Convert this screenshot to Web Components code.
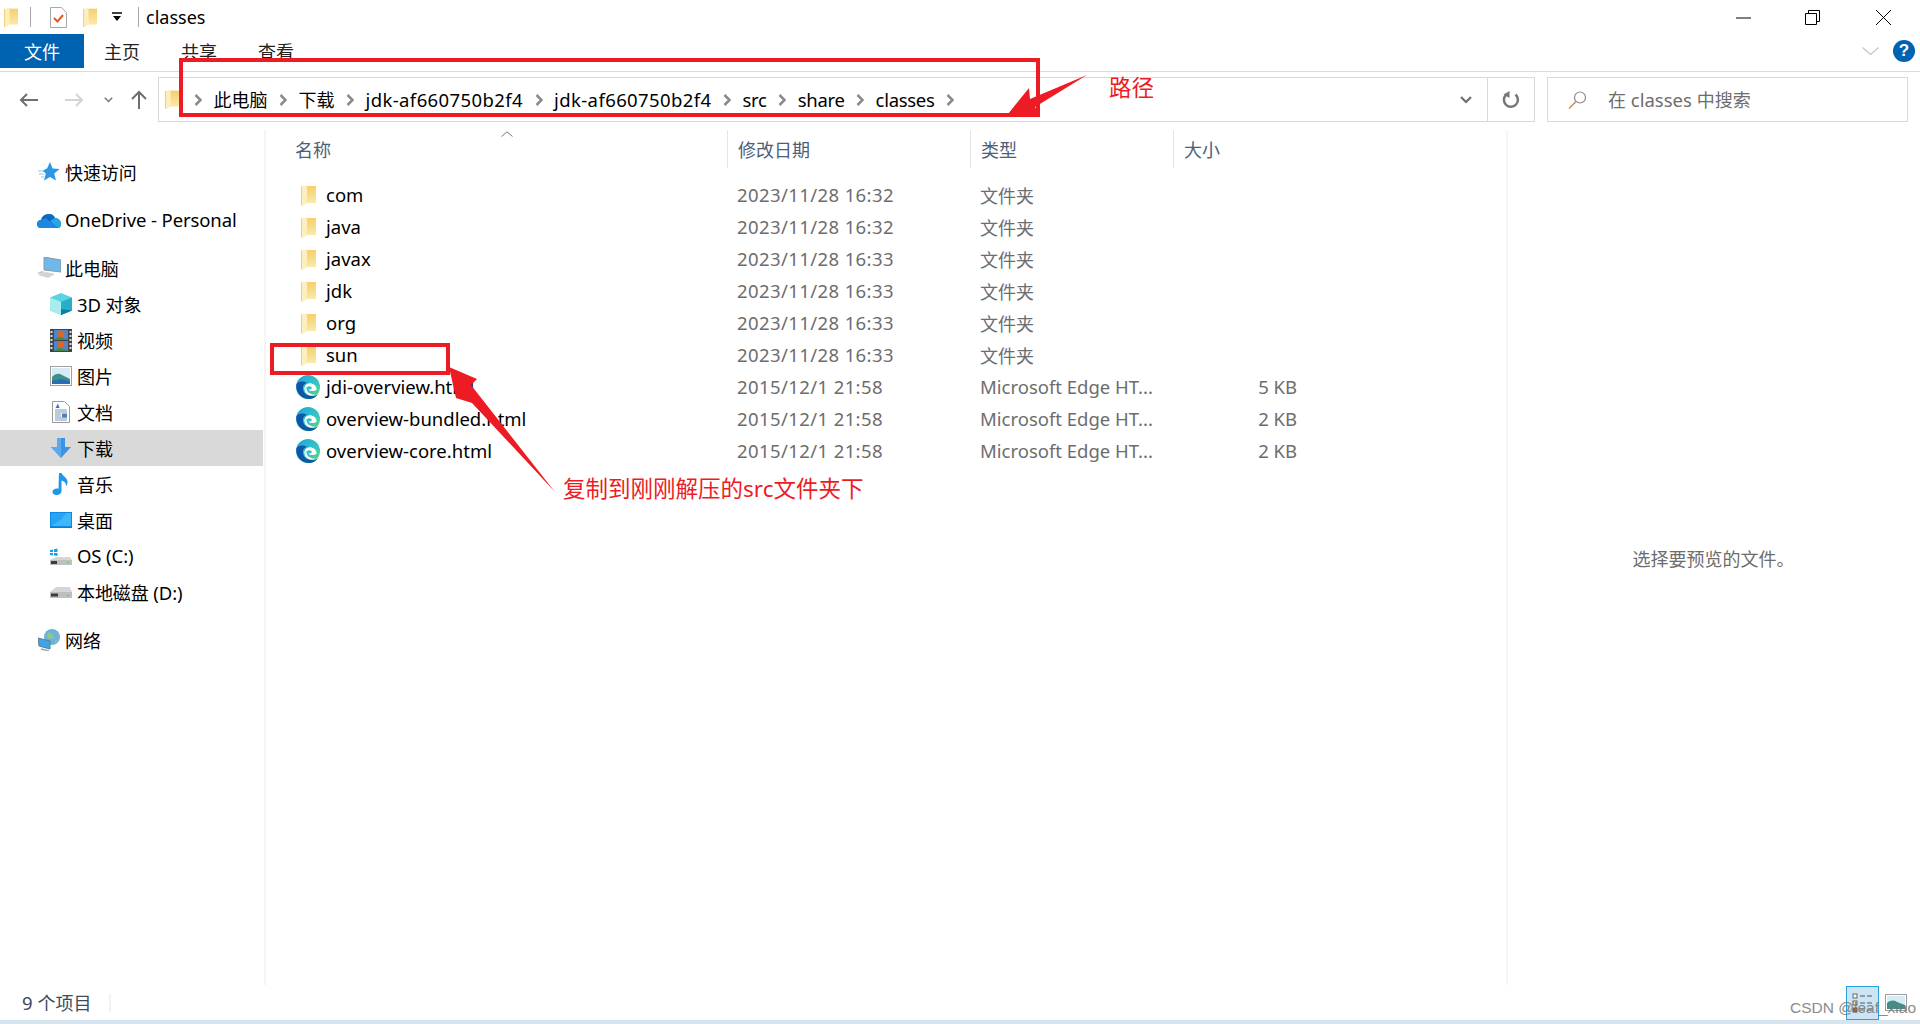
<!DOCTYPE html>
<html lang="zh">
<head>
<meta charset="utf-8">
<title>classes</title>
<style>
html,body{margin:0;padding:0;background:#fff}
body{width:1920px;height:1024px;overflow:hidden;position:relative;display:flex;flex-direction:column;font-family:"Noto Sans","Noto Sans CJK SC",sans-serif;color:#000}
win-main{flex:1}
</style>
</head>
<body>
<win-title label="classes"></win-title>
<win-ribbon></win-ribbon>
<win-address></win-address>
<win-main></win-main>
<win-status></win-status>
<win-notes></win-notes>
<script>
// icons
const folderIcon=(w=15,h=21)=>`<svg width="${w}" height="${h}" viewBox="0 0 15 21"><defs><linearGradient id="fb" x1="0" y1="0" x2="0" y2="1"><stop offset="0" stop-color="#f3cf6f"/><stop offset="1" stop-color="#fce8a8"/></linearGradient></defs><path d="M5 1H15V18H5z" fill="url(#fb)"/><path d="M0 1.5 6 0V18L1 21 0 20z" fill="#fdeebc"/><path d="M0 1.5 1 1V21L0 20z" fill="#f1cf77"/></svg>`
const edgeIcon=`<svg width="24" height="24" viewBox="0 0 24 24"><defs><linearGradient id="eg" x1="0" y1="0" x2="1" y2="1"><stop offset="0" stop-color="#1e9fdc"/><stop offset=".55" stop-color="#2fc5c8"/><stop offset="1" stop-color="#6ad86e"/></linearGradient></defs><circle cx="12" cy="12" r="12" fill="url(#eg)"/><path d="M.6 9C-1 17 5 24 13 24c4 0 7-2 8.500-4.500-5 2.500-11 1.500-13.500-2.500C5.500 13 7 8.500 11 8 7 5.500 2 6.500.6 9z" fill="#0d57a5"/><path d="M8.500 15.500C7.500 11 11 7.500 15.500 8.500c3.500.8 5.500 3.500 5 6.500-3 1.500-6.500 1.300-8-.3 1.500 0 3-.5 3.500-1.700-.7-1.800-3.500-2.300-5-1-1.500 1.200-2 2.500-2.500 3.500z" fill="#fff"/><path d="M9 17c2 3.500 7 5 12 2.800-3.500.3-7.500-.6-9.500-3.300-.8-1.100-1-2.500-.6-3.500C9.300 13.500 8.300 15.500 9 17z" fill="#fff"/></svg>`
const navIcons={
star:`<svg width="22" height="20" viewBox="0 0 22 20"><path d="M12 0l2.600 6.500 7 .5-5.400 4.500 1.800 7L12 15l-6 3.500 1.800-7-3-2.500 2.700-2 1.500-.5z" fill="#2d97e6"/><path d="M0 9h6M1 12h5M3 15h3" stroke="#8cc6f2" stroke-width="1"/></svg>`,
cloud:`<svg width="24" height="16" viewBox="0 0 24 16"><path d="M4 16C1 16 0 13.500 0 12c0-2.500 2-4 4-4 1-4 4-6 8-6 2.500 0 5 1.500 6 4 3.500 0 6 3 6 6 0 2-1 4-3 4z" fill="#0a64b8"/><path d="M7 5.500C8.500 3 10 2 12 2c2.500 0 5 1.500 6 4l-4 2-4-3z" fill="#0f6cc4"/><path d="M0 12c0-2.500 2-4 4-4l5-2 12 10H4C1 16 0 13.500 0 12z" fill="#1a8ae0"/><path d="M13 9l5-3c3.500 0 6 3 6 6 0 2-1 4-3 4z" fill="#2aa5e8"/></svg>`,
pc:`<svg width="24" height="22" viewBox="0 0 24 22"><path d="M7 0l17 3v12L7 13z" fill="#6fb8ea" stroke="#8a9aa6" stroke-width="1"/><path d="M1 18l8-3 9 2-7 4z" fill="#d0d4d8"/><path d="M0 16l5-2 3 1-5 2z" fill="#c2c7cc"/></svg>`,
cube:`<svg width="22" height="22" viewBox="0 0 22 22"><path d="M11 0l11 4.500v13L11 22 0 17.500v-13z" fill="#5ad3e3"/><path d="M0 4.500L11 9v13L0 17.500z" fill="#a9ecf0"/><path d="M22 4.500L11 9v13l11-4.500z" fill="#26afc9"/><path d="M11 16l11 1.500L11 22z" fill="#0f7f9c"/></svg>`,
film:`<svg width="22" height="23" viewBox="0 0 22 23"><rect width="22" height="23" fill="#444"/><rect x="4" y="1" width="14" height="10" fill="#4b86d0"/><rect x="4" y="12" width="14" height="10" fill="#4b86d0"/><circle cx="11" cy="5" r="3.500" fill="#d9672a"/><path d="M4 11l5-3 4 1 5 2z" fill="#3f8b3a"/><circle cx="11" cy="16" r="3.500" fill="#d9672a"/><path d="M4 22l5-3 4 1 5 2z" fill="#3f8b3a"/><path d="M1.500 2v19M20.500 2v19" stroke="#ddd" stroke-width="2" stroke-dasharray="2 2"/></svg>`,
pic:`<svg width="22" height="20" viewBox="0 0 22 20"><rect x=".5" y=".5" width="21" height="19" fill="#fff" stroke="#a0a0a0"/><rect x="2" y="2" width="18" height="16" fill="#d7eaf5"/><path d="M2 11c4-4 7-4 10-2l8 4v5H2z" fill="#3f8f88"/><path d="M2 15l9-2 9 2v3H2z" fill="#2a6fb0"/></svg>`,
doc:`<svg width="18" height="22" viewBox="0 0 18 22"><path d="M.5.500h12l5 5v16H.5z" fill="#fff" stroke="#9a9a9a"/><path d="M3 9h12M3 11h12M3 13h6M3 15h6M3 17h12M3 19h12" stroke="#7d97b3"/><rect x="10" y="12.500" width="5" height="4" fill="#4f81b5"/><path d="M6 2.500L3.500 7h4z" fill="#2d7bc8"/></svg>`,
down:`<svg width="20" height="20" viewBox="0 0 20 20"><path d="M6 0h8v9h6L10 20 0 9h6z" fill="#3b93e3"/><path d="M6 0h4v20L0 9h6z" fill="#5aaaf0"/></svg>`,
music:`<svg width="18" height="22" viewBox="0 0 18 22"><path d="M7 0h2.500c.5 3 6.500 4.500 6 10-.2 1.500-1 2.500-1.500 3 .3-3-2-5-4.500-5.500V18c0 2.500-2.500 4-5 4-2.200 0-4-1-4-3 0-2.500 3-4 6-3.200z" fill="#1c98e8"/></svg>`,
desk:`<svg width="22" height="16" viewBox="0 0 22 16"><rect width="22" height="16" fill="#0f88e0"/><path d="M1 1h20v13H1z" fill="#26a5f5"/><path d="M1 14l10-6 5-7h5v13z" fill="#40b6fa"/><rect y="15" width="22" height="1" fill="#666"/></svg>`,
os:`<svg width="22" height="17" viewBox="0 0 22 17"><path d="M0 12l6-3h14l2 3v5H0z" fill="#d6d6d6"/><path d="M0 12h22v5H0z" fill="#bfbfbf"/><rect x="1" y="13" width="6" height="3" fill="#3c3c3c"/><rect x="17" y="14" width="2" height="1" fill="#4fd34f"/><path d="M0 2l3-.5V4H0zM4 1.300L7.500.5V4H4zM0 5h3v2.500L0 7zM4 5h3.500v3L4 7.500z" fill="#14a3e8"/></svg>`,
disk:`<svg width="22" height="11" viewBox="0 0 22 11"><path d="M0 5l6-5h14l2 5v6H0z" fill="#d6d6d6"/><path d="M0 5h22v6H0z" fill="#bfbfbf"/><rect x="1" y="6.500" width="7" height="3" fill="#3c3c3c"/><rect x="17" y="8" width="2" height="1" fill="#4fd34f"/></svg>`,
net:`<svg width="22" height="22" viewBox="0 0 22 22"><circle cx="14" cy="8" r="8" fill="#6fb2d8"/><path d="M10 3l4 2 2 4-4 1-3-2zM17 11l3 1-3 3z" fill="#8fc78a"/><path d="M0 9l12 3v8L1 17z" fill="#3fa5e8" stroke="#5c7c95" stroke-width="1"/><path d="M3 20l8 2" stroke="#9ca7ae" stroke-width="1.500"/></svg>`
}

// mixed text: CJK runs get a smaller box than latin
const txt=s=>s.replace(/[\u3000-\u9fff]+/g,m=>`<span class="c">${m}</span>`)

class WinView extends HTMLElement {
    constructor()
    {
        super()
        this.attachShadow({mode:"open"})
    }
    get overideCSS(){return ``}
    get overideTemplate(){return ``}
    connectedCallback()
    {
        this.shadowRoot.innerHTML=`<style>
            *{box-sizing:border-box}
            :host{display:block;box-sizing:border-box;font-family:"Noto Sans","Noto Sans CJK SC",sans-serif;font-size:18.500px;line-height:24px}
            .c{font-size:18px;font-family:"Noto Sans CJK SC","Noto Sans",sans-serif}
            svg{display:block;flex:none}
            ${this.overideCSS}</style>${this.overideTemplate}`
    }
}

class WinTitle extends WinView{
    get overideCSS(){return `
        :host{height:34px}
        .bar{height:34px;display:flex;align-items:center}
        .sep{width:1px;height:20px;background:#a8a8a8}
        .name{margin-left:7px;font-size:18px}
        .ctl{margin-left:auto;display:flex;align-items:center}
        .a{margin-left:4px}
    `}
    get overideTemplate(){return `<div class="bar">
        <span class="a">${folderIcon(14,21)}</span>
        <span class="sep" style="margin-left:12px"></span>
        <svg style="margin-left:19px" width="17" height="21" viewBox="0 0 17 21"><path d="M.5.500h11l5 5v15H.5z" fill="#fff" stroke="#a8a8a8"/><path d="M4 11l3.500 3.500L13 8" fill="none" stroke="#e8571f" stroke-width="2"/></svg>
        <span style="margin-left:16px">${folderIcon(14,21)}</span>
        <svg style="margin-left:15px" width="10" height="10" viewBox="0 0 10 10"><path d="M0 1h10" stroke="#000" stroke-width="1.500"/><path d="M1 4h8L5 9z" fill="#000"/></svg>
        <span class="sep" style="margin-left:16px"></span>
        <span class="name">${this.getAttribute('label')}</span>
        <div class="ctl">
            <svg width="15" height="15" viewBox="0 0 15 15"><path d="M0 8h15" stroke="#000"/></svg>
            <svg style="margin-left:54px" width="15" height="15" viewBox="0 0 15 15" fill="none" stroke="#000"><path d="M.5 3.500h11v11H.5z"/><path d="M3.500 3.500V.5h11v11h-3"/></svg>
            <svg style="margin-left:56px;margin-right:29px" width="15" height="15" viewBox="0 0 15 15" stroke="#000"><path d="M0 0l15 15M15 0L0 15"/></svg>
        </div>
    </div>`}
}

class WinRibbon extends WinView{
    get overideCSS(){return `
        :host{height:38px;border-bottom:1px solid #dadada}
        .bar{height:34px;display:flex;align-items:center}
        .file{width:84px;height:34px;background:#0063b1;color:#fff;display:flex;align-items:center;justify-content:center}
        .tab{margin-left:20px;width:36px;color:#222}
        .tab+.tab{margin-left:41px}
        .right{margin-left:auto;display:flex;align-items:center;padding-right:5px;gap:14px}
        .help{width:22px;height:22px;border-radius:50%;background:#0063b1;color:#fff;font:bold 17px/22px "Liberation Sans",sans-serif;text-align:center}
    `}
    get overideTemplate(){return `<div class="bar">
        <div class="file">${txt('文件')}</div>
        <div class="tab">${txt('主页')}</div>
        <div class="tab">${txt('共享')}</div>
        <div class="tab">${txt('查看')}</div>
        <div class="right">
            <svg width="17" height="9" viewBox="0 0 17 9"><path d="M.5.500l8 7 8-7" fill="none" stroke="#c4c4c4" stroke-width="1.200"/></svg>
            <div class="help">?</div>
        </div>
    </div>`}
}

class WinAddress extends WinView{
    get overideCSS(){return `
        :host{height:50px;padding-top:5px}
        .bar{display:flex;align-items:center;height:45px}
        .nav{width:158px;display:flex;align-items:center;flex:none;position:relative}
        .box{width:1377px;height:45px;border:1px solid #d9d9d9;display:flex;align-items:center;padding-left:6px;flex:none}
        .crumb{display:flex;align-items:center;gap:11.500px;margin-left:15px}
        .wide{letter-spacing:.4px}
        .tight{letter-spacing:-.3px}
        .drop{margin-left:auto;margin-right:15px}
        .refresh{width:47px;height:43px;border-left:1px solid #d9d9d9;display:flex;align-items:center;justify-content:center}
        .search{margin-left:12px;width:361px;height:45px;border:1px solid #d9d9d9;display:flex;align-items:center;padding-left:20px;color:#6d6d6d}
        .search span.t{margin-left:21px}
    `}
    get overideTemplate(){
        const chev=`<svg width="8" height="12" viewBox="0 0 8 12"><path d="M1.500 1l5 5-5 5" fill="none" stroke="#8a8a8a" stroke-width="2.500"/></svg>`
        const path=[['此电脑',''],['下载',''],['jdk-af660750b2f4','wide'],['jdk-af660750b2f4','wide'],['src','tight'],['share','tight'],['classes','tight']]
        return `<div class="bar">
        <div class="nav">
            <svg style="margin-left:19px" width="19" height="14" viewBox="0 0 19 14"><path d="M19 7H2M8 1L2 7l6 6" fill="none" stroke="#6f6f6f" stroke-width="2"/></svg>
            <svg style="margin-left:27px" width="19" height="14" viewBox="0 0 19 14"><path d="M0 7h17M11 1l6 6-6 6" fill="none" stroke="#d4d4d4" stroke-width="2"/></svg>
            <svg style="margin-left:20px" width="9" height="6" viewBox="0 0 9 6"><path d="M.8.800l3.700 3.700L8.200.800" fill="none" stroke="#777" stroke-width="1.500"/></svg>
            <svg style="margin-left:18px" width="16" height="19" viewBox="0 0 16 19"><path d="M8 19V2M1 9l7-7 7 7" fill="none" stroke="#6f6f6f" stroke-width="2"/></svg>
        </div>
        <div class="box">
            ${folderIcon(14,21)}
            <div class="crumb">${chev}${path.map(p=>`<span class="${p[1]}">${txt(p[0])}</span>${chev}`).join('')}</div>
            <svg class="drop" width="12" height="8" viewBox="0 0 12 8"><path d="M1 1l5 5 5-5" fill="none" stroke="#6f6f6f" stroke-width="2.200"/></svg>
            <div class="refresh"><svg width="18" height="18" viewBox="0 0 18 18"><path d="M13.500 3.500A7 7 0 1 1 4 3.800" fill="none" stroke="#777" stroke-width="2.500"/><path d="M7.500 0v7L1.500 3.500z" fill="#777"/></svg></div>
        </div>
        <div class="search">
            <svg width="19" height="18" viewBox="0 0 19 18" fill="none"><circle cx="12" cy="6.500" r="5.500" stroke="#8a8a8a" stroke-width="1.200"/><path d="M8 10.500L1 17.500" stroke="#c98b50" stroke-width="1.500"/></svg>
            <span class="t">${txt('在 classes 中搜索')}</span>
        </div>
    </div>`}
}

class NavRow extends WinView{
    get overideCSS(){return `
        :host{height:36px;width:263px;display:flex;align-items:center;gap:4px;padding-left:37px}
        :host([child]){padding-left:49px}
        :host([selected]){background:#d9d9d9}
        .i{width:24px;display:flex;justify-content:center;flex:none}
        .l{white-space:nowrap;letter-spacing:-.1px}
    `}
    get overideTemplate(){return `<span class="i">${navIcons[this.getAttribute('icon')]}</span><span class="l">${txt(this.getAttribute('label'))}</span>`}
}

class NavPane extends WinView{
    get overideCSS(){return `
        :host{width:266px;border-right:2px solid #f5f5f5;flex:none;padding-top:24px}
        .g{display:flex;flex-direction:column;margin-bottom:12px}
    `}
    get overideTemplate(){return `
        <div class="g"><nav-row icon="star" label="快速访问"></nav-row></div>
        <div class="g"><nav-row icon="cloud" label="OneDrive - Personal"></nav-row></div>
        <div class="g">
            <nav-row icon="pc" label="此电脑"></nav-row>
            <nav-row child icon="cube" label="3D 对象"></nav-row>
            <nav-row child icon="film" label="视频"></nav-row>
            <nav-row child icon="pic" label="图片"></nav-row>
            <nav-row child icon="doc" label="文档"></nav-row>
            <nav-row child selected icon="down" label="下载"></nav-row>
            <nav-row child icon="music" label="音乐"></nav-row>
            <nav-row child icon="desk" label="桌面"></nav-row>
            <nav-row child icon="os" label="OS (C:)"></nav-row>
            <nav-row child icon="disk" label="本地磁盘 (D:)"></nav-row>
        </div>
        <div class="g"><nav-row icon="net" label="网络"></nav-row></div>
    `}
}

const cols='grid-template-columns:461px 243px 203px 135px;'
class FileRow extends WinView{
    get overideCSS(){return `
        :host{display:grid;${cols}height:32px;align-items:center;color:#6d6d6d}
        .n{display:flex;align-items:center;padding-left:30px;color:#000;white-space:nowrap}
        .i{width:24px;display:flex;justify-content:center;flex:none;margin-right:6px}
        .d{padding-left:10px;letter-spacing:.4px}
        .t{padding-left:10px}
        .s{text-align:right;padding-right:11px}
    `}
    get overideTemplate(){
        const a=n=>this.getAttribute(n)||''
        return `<div class="n"><span class="i">${a('kind')=='edge'?edgeIcon:folderIcon()}</span>${a('name')}</div>
        <div class="d">${a('date')}</div><div class="t">${txt(a('type'))}</div><div class="s">${a('size')}</div>`
    }
}

class FileList extends WinView{
    get overideCSS(){return `
        :host{width:1240px;flex:none}
        .head{display:grid;${cols}height:38px;color:#4c607a;position:relative}
        .head div{display:flex;align-items:center;padding-left:10px;border-left:1px solid #e5e5e5}
        .head div:first-child{padding-left:29px;border-left:0}
        .head div:last-child{border-right:1px solid #e5e5e5}
        .sort{position:absolute;left:235px;top:1px}
        .rows{padding-top:11px}
    `}
    get overideTemplate(){
        const f=(n,d)=>`<file-row name="${n}" date="${d}" type="文件夹"></file-row>`
        const e=(n,s)=>`<file-row kind="edge" name="${n}" date="2015/12/1 21:58" type="Microsoft Edge HT..." size="${s}"></file-row>`
        return `<div class="head">
            <div>${txt('名称')}</div><div>${txt('修改日期')}</div><div>${txt('类型')}</div><div>${txt('大小')}</div>
            <svg class="sort" width="12" height="6" viewBox="0 0 12 6"><path d="M.5 5.500L6 .8l5.500 4.700" fill="none" stroke="#777"/></svg>
        </div>
        <div class="rows">
            ${f('com','2023/11/28 16:32')}${f('java','2023/11/28 16:32')}${f('javax','2023/11/28 16:33')}
            ${f('jdk','2023/11/28 16:33')}${f('org','2023/11/28 16:33')}${f('sun','2023/11/28 16:33')}
            ${e('jdi-overview.html','5 KB')}${e('overview-bundled.html','2 KB')}${e('overview-core.html','2 KB')}
        </div>`
    }
}

class PreviewPane extends WinView{
    get overideCSS(){return `
        :host{flex:1;border-left:2px solid #f5f6f7;display:flex;align-items:center;justify-content:center;color:#6d6d6d;padding-right:1px}
    `}
    get overideTemplate(){return txt('选择要预览的文件。')}
}

class WinMain extends WinView{
    get overideCSS(){return `
        :host{display:flex;margin-top:8px;min-height:0}
    `}
    get overideTemplate(){return `<nav-pane></nav-pane><file-list></file-list><preview-pane></preview-pane>`}
}

class WinStatus extends WinView{
    get overideCSS(){return `
        :host{height:39px;flex:none}
        .bar{height:35px;display:flex;align-items:center;padding-left:22px;color:#3c4a5c}
        .sep{width:2px;height:18px;background:#f3f3f3;margin-left:18px}
        .btn{margin-left:auto;width:33px;height:34px;background:#cce5f5;border:1px solid #26a0da;display:flex;align-items:center;justify-content:center}
        .thumb{margin:0 13px 0 6px}
        .strip{height:4px;background:#d5e4ee}
    `}
    get overideTemplate(){return `<div class="bar">
        <span>${txt('9 个项目')}</span><span class="sep"></span>
        <div class="btn"><svg width="22" height="20" viewBox="0 0 22 20"><rect x="1" y="1" width="4" height="4" fill="#fff" stroke="#666"/><rect x="1" y="8" width="4" height="4" fill="#ffe08a" stroke="#666"/><rect x="1" y="15" width="4" height="4" fill="#b5542a" stroke="#666"/><path d="M8 3h5M15 3h5M8 10h5M15 10h5M8 17h5M15 17h5" stroke="#555"/></svg></div>
        <svg class="thumb" width="22" height="17" viewBox="0 0 22 17"><rect x=".5" y=".5" width="21" height="16" fill="#fff" stroke="#9c9c9c"/><rect x="2" y="2" width="18" height="13" fill="#d7eaf5"/><path d="M2 9c4-3 7-3 10-1l8 3v4H2z" fill="#3f8f88"/></svg>
    </div><div class="strip"></div>`}
}

// red marks drawn over the window, plus the CSDN watermark
class WinNotes extends WinView{
    get overideCSS(){return `
        :host{position:absolute;inset:0;pointer-events:none}
        svg{position:absolute;left:0;top:0}
        .note{position:absolute;color:#ed1c24;font-size:22.500px;line-height:30px;white-space:nowrap}
        .note .c{font-size:22.500px}
        .mark{position:absolute;left:1790px;top:998px;color:#777;opacity:.85;font:15.500px/20px "Liberation Sans",sans-serif;white-space:nowrap}
    `}
    get overideTemplate(){return `
        <svg width="1920" height="1024" viewBox="0 0 1920 1024" fill="none">
            <rect x="181" y="60" width="857" height="55" stroke="#ed1c24" stroke-width="4"/>
            <rect x="272" y="345" width="176" height="28" stroke="#ed1c24" stroke-width="4"/>
            <path d="M1087 75L1030 99 1029 88 1008 114 1040 115 1035 107z" fill="#ed1c24"/>
            <path d="M449 367L477 379 471 385 555 492 472 403 456 398z" fill="#ed1c24"/>
        </svg>
        <div class="note" style="left:1109px;top:71px">${txt('路径')}</div>
        <div class="note" style="left:563px;top:472px">${txt('复制到刚刚解压的src文件夹下')}</div>
        <div class="mark">CSDN @leaf_xiao</div>
    `}
}

customElements.define('win-title',WinTitle)
customElements.define('win-ribbon',WinRibbon)
customElements.define('win-address',WinAddress)
customElements.define('nav-row',NavRow)
customElements.define('nav-pane',NavPane)
customElements.define('file-row',FileRow)
customElements.define('file-list',FileList)
customElements.define('preview-pane',PreviewPane)
customElements.define('win-main',WinMain)
customElements.define('win-status',WinStatus)
customElements.define('win-notes',WinNotes)
</script>
</body>
</html>
